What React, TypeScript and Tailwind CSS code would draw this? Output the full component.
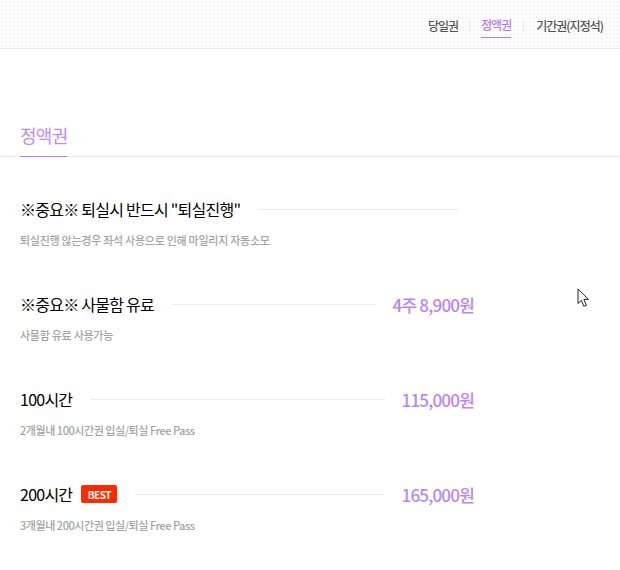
const FONT = "font-['Noto_Sans_CJK_KR','Noto_Sans',sans-serif]"

const ITEMS = [
  { title: '※중요※ 퇴실시 반드시 "퇴실진행"', desc: "퇴실진행 않는경우 좌석 사용으로 인해 마일리지 자동소모", width: "w-[438px]", tight: "tracking-[-0.27px]" },
  { title: "※중요※ 사물함 유료", desc: "사물함 유료 사용가능", price: "4주 8,900원", width: "w-[454px]", tight: "tracking-[-0.27px]" },
  { title: "100시간", desc: "2개월내 100시간권 입실/퇴실 Free Pass", price: "115,000원", width: "w-[454px]", tight: "tracking-[-0.45px]" },
  { title: "200시간", best: true, desc: "3개월내 200시간권 입실/퇴실 Free Pass", price: "165,000원", width: "w-[454px]", tight: "tracking-[-0.45px]" },
]

function Cursor() {
  return (
    <svg className="absolute left-[577px] top-[288px]" width="13" height="20" viewBox="0 0 13 20">
      <path
        d="M1 1v14.5l3.4-3.2 2.4 6 2.6-1-2.5-5.9h4.6z"
        fill="#fff"
        stroke="#23232b"
        strokeWidth="1"
      />
    </svg>
  )
}

export default function App() {
  return (
    <div className={`relative h-[570px] w-[620px] overflow-hidden bg-white ${FONT}`}>
      <header className="flex h-[49px] items-center justify-end border-b border-[#ececec] bg-[#fdfdfd] bg-[radial-gradient(#f5f5f5_1px,transparent_1px)] bg-[length:4px_4px] pr-[17px] pt-[4px]">
        <a className="text-[12px] font-medium tracking-[-1px] text-[#555]">당일권</a>
        <span className="mx-[11px] h-[14px] w-px bg-[#e8e8e8]" />
        <a className="mt-[1px] border-b border-[#b77cf5] pb-[3px] text-[12px] font-medium tracking-[-1px] text-[#b77cf5]">
          정액권
        </a>
        <span className="mx-[12px] h-[14px] w-px bg-[#e8e8e8]" />
        <a className="text-[12px] font-medium tracking-[-1px] text-[#555]">기간권(지정석)</a>
      </header>

      <div className="mt-[62px] border-b border-[#e8e8e8]">
        <h2 className="-mb-px ml-[20px] h-[46px] w-[47px] whitespace-nowrap border-b border-[#b77cf5] pt-[11px] text-[18px] leading-[26px] tracking-[-0.7px] text-[#c08af5]">
          정액권
        </h2>
      </div>

      <ul className="mt-[37px] flex flex-col gap-[39px] pl-[20px]">
        {ITEMS.map((item) => (
          <li key={item.title} className={`${item.width} h-[56px]`}>
            <div className="flex h-[30px] items-center">
              <span className="whitespace-nowrap text-[16px] font-normal tracking-[-0.75px] text-black">
                {item.title}
              </span>
              {item.best && (
                <span className="ml-[9px] flex h-[18px] w-[36px] items-center justify-center rounded-[2px] bg-[#ff2a00] text-[10px] font-bold tracking-[-0.5px] text-white">
                  BEST
                </span>
              )}
              <span className="ml-[18px] h-px flex-1 bg-[#ebebeb]" />
              {item.price && (
                <span className="ml-[17px] mt-[2px] whitespace-nowrap text-[17px] font-medium tracking-[-0.8px] text-[#b985f5]">
                  {item.price}
                </span>
              )}
            </div>
            <p className={`mt-[6px] whitespace-nowrap text-[11px] font-medium leading-[20px] text-[#a3a3a3] ${item.tight}`}>
              {item.desc}
            </p>
          </li>
        ))}
      </ul>

      <Cursor />
    </div>
  )
}
